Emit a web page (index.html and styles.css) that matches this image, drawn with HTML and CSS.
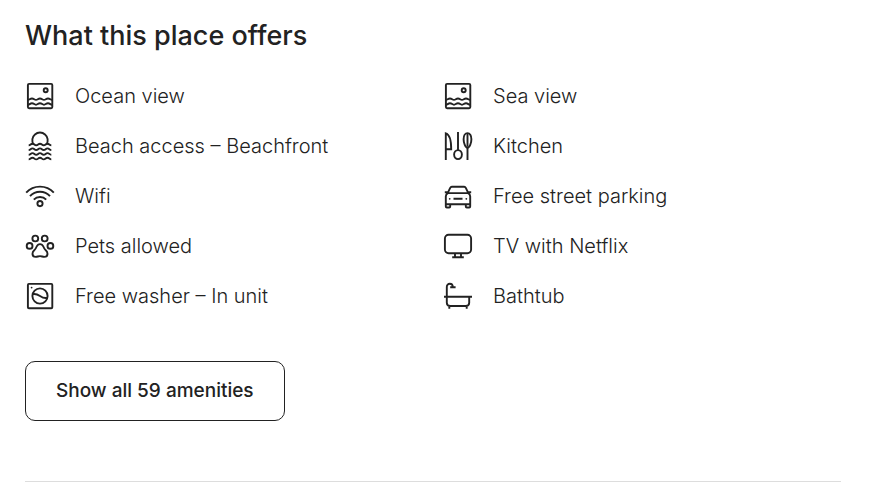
FILE: index.html
```html
<!DOCTYPE html>
<html lang="en">
<head>
<meta charset="utf-8">
<meta name="viewport" content="width=device-width, initial-scale=1">
<title>What this place offers</title>
<link rel="stylesheet" href="styles.css">
</head>
<body>
<svg class="sprite" aria-hidden="true">
  <symbol id="view" viewBox="0 0 30 30">
    <rect x="2.9" y="2.9" width="24.4" height="24.4" rx="1.2"/>
    <circle cx="20.7" cy="9.3" r="2"/>
    <path d="M3 18.900c1.500 0 2-1.400 4-1.400s2.300 1.400 4 1.400 2-1.400 4-1.400 2.300 1.400 4 1.400 2-1.400 4-1.400 2.500 1.400 4 1.400M3 23.700c1.500 0 2-1.400 4-1.400s2.300 1.400 4 1.400 2-1.400 4-1.400 2.300 1.400 4 1.400 2-1.400 4-1.400 2.500 1.400 4 1.400"/>
  </symbol>
  <symbol id="beach" viewBox="0 0 30 30">
    <path d="M8.500 13.400a7.700 7.700 0 1 1 13 0"/>
    <path d="M3.700 14.300c1.900 0 1.900-1.600 3.800-1.600s1.900 1.600 3.750 1.600S13.100 12.700 15 12.700s1.900 1.600 3.750 1.600 1.900-1.600 3.750-1.600 1.900 1.600 3.800 1.600M3.700 19c1.900 0 1.900-1.600 3.800-1.600s1.900 1.600 3.750 1.600S13.100 17.400 15 17.400s1.900 1.600 3.750 1.600 1.900-1.600 3.750-1.600 1.900 1.600 3.800 1.600M3.700 23.700c1.900 0 1.900-1.600 3.800-1.600s1.900 1.600 3.750 1.600S13.100 22.100 15 22.100s1.900 1.600 3.750 1.600 1.900-1.600 3.750-1.600 1.900 1.600 3.800 1.600M3.700 28.400c1.900 0 1.900-1.600 3.800-1.600s1.900 1.600 3.750 1.600S13.100 26.800 15 26.800s1.900 1.600 3.750 1.600 1.900-1.600 3.750-1.600 1.900 1.600 3.800 1.600"/>
  </symbol>
  <symbol id="wifi" viewBox="0 0 30 30">
    <path d="M1.200 11.700a18.700 18.700 0 0 1 27.600 0M5 15.200a13.500 13.500 0 0 1 20 0M8.800 18.700a8.400 8.400 0 0 1 12.400 0"/>
    <circle cx="15" cy="22.600" r="2.600"/>
  </symbol>
  <symbol id="paw" viewBox="0 0 30 30">
    <circle cx="10.300" cy="7.500" r="2.900"/><circle cx="19.700" cy="7.500" r="2.900"/>
    <circle cx="4.600" cy="14.900" r="2.900"/><circle cx="25.400" cy="14.900" r="2.900"/>
    <path d="M15 13.100c-1.700 0-2.700 1-3.300 2.400-.7 1.700-1.400 2.700-2.500 3.800-1.200 1.100-1.700 2-1.700 3.400 0 1.900 1.300 3.200 3.200 3.200 1.700 0 2.500-.8 4.300-.8s2.600.8 4.300.8c1.900 0 3.200-1.300 3.200-3.200 0-1.400-.5-2.300-1.700-3.400-1.100-1.100-1.800-2.100-2.500-3.800-.6-1.400-1.600-2.400-3.300-2.400z"/>
  </symbol>
  <symbol id="washer" viewBox="0 0 30 30">
    <rect x="2.900" y="2.900" width="24.400" height="24.400" rx="1"/>
    <circle cx="15" cy="15" r="7.600"/>
    <path d="M7.500 13.200c3-.8 5 .1 7.500 1.800s4.500 2.600 7.500 1.800"/>
    <circle class="solid" cx="6.600" cy="6.600" r=".9"/>
  </symbol>
  <symbol id="kitchen" viewBox="0 0 30 30">
    <path d="M2.800 29V2.300c3 .8 5.400 6.200 5.400 15.900H2.800M15 1v18M24.500 15.300V29M24.500 2v13"/>
    <ellipse cx="15" cy="23.600" rx="3.900" ry="4.500"/>
    <path d="M24.500 2.100c-2.300 0-3.900 2.600-3.900 6.200s1.800 8.500 3.900 8.500 3.900-4.900 3.900-8.500-1.600-6.200-3.900-6.200z"/>
  </symbol>
  <symbol id="car" viewBox="0 0 30 30">
    <path d="M4.900 11.700 7.200 6.800c.4-.8.800-1.100 1.600-1.100h12.400c.8 0 1.200.3 1.600 1.100l2.300 4.900M1.800 11.300h2.900l.2.800h20.200l.2-.8h2.900M4.900 12.100c-1.400.8-2.100 1.800-2.100 3.300v7.800h24.400v-7.800c0-1.500-.7-2.500-2.100-3.300M2.800 23v2.500c0 .6.4 1 1 1h2.400c.6 0 1-.4 1-1V23M22.800 23v2.500c0 .6.400 1 1 1h2.400c.6 0 1-.4 1-1V23M10.500 17.800h9"/>
    <circle class="solid" cx="6.700" cy="17.800" r=".9"/><circle class="solid" cx="23.300" cy="17.800" r=".9"/>
  </symbol>
  <symbol id="tv" viewBox="0 0 30 30">
    <rect x="1.900" y="3.800" width="26.200" height="18.400" rx="3.700"/>
    <path d="M12 22.200v3.900M18 22.200v3.900M9.200 26.200h11.600"/>
  </symbol>
  <symbol id="bath" viewBox="0 0 30 30">
    <path d="M1 15.800h28M3.800 15.800V6c0-2 1.300-3.200 3-3.200s3 1.200 3 3.400M7.200 6.300h5.400M3.800 16v5.800c0 2 1.400 3.200 3.300 3.200h15.800c1.900 0 3.300-1.200 3.300-3.200V16M6.300 25v2.800M23.700 25v2.800"/>
  </symbol>
</svg>
<main class="section">
  <h2 class="title">What this place offers</h2>
  <ul class="amenities">
    <li class="amenity"><svg class="icon" aria-hidden="true"><use href="#view"/></svg><span>Ocean view</span></li>
    <li class="amenity"><svg class="icon" aria-hidden="true"><use href="#view"/></svg><span>Sea view</span></li>
    <li class="amenity"><svg class="icon" aria-hidden="true"><use href="#beach"/></svg><span>Beach access – Beachfront</span></li>
    <li class="amenity"><svg class="icon" aria-hidden="true"><use href="#kitchen"/></svg><span>Kitchen</span></li>
    <li class="amenity"><svg class="icon" aria-hidden="true"><use href="#wifi"/></svg><span>Wifi</span></li>
    <li class="amenity"><svg class="icon" aria-hidden="true"><use href="#car"/></svg><span>Free street parking</span></li>
    <li class="amenity"><svg class="icon" aria-hidden="true"><use href="#paw"/></svg><span>Pets allowed</span></li>
    <li class="amenity"><svg class="icon" aria-hidden="true"><use href="#tv"/></svg><span>TV with Netflix</span></li>
    <li class="amenity"><svg class="icon" aria-hidden="true"><use href="#washer"/></svg><span>Free washer – In unit</span></li>
    <li class="amenity"><svg class="icon" aria-hidden="true"><use href="#bath"/></svg><span>Bathtub</span></li>
  </ul>
  <button class="show-all" type="button">Show all 59 amenities</button>
</main>
</body>
</html>
```
FILE: styles.css
```css
* {
  box-sizing: border-box;
}

body {
  margin: 0;
  background: #fff;
  color: #222;
  font-family: Inter, "Noto Sans", sans-serif;
  font-size: 20px;
  line-height: 30px;
}

.sprite {
  display: none;
}

.section {
  margin: 0 42px 0 25px;
  padding: 18px 0 60px;
  border-bottom: 1px solid #ddd;
}

.title {
  margin: 0;
  font-size: 27px;
  font-weight: 500;
  line-height: 36px;
}

.amenities {
  display: grid;
  grid-template-columns: 1fr 1fr;
  gap: 20px;
  margin: 27px 0 50px;
  padding: 0;
  list-style: none;
  font-weight: 300;
}

.amenity {
  display: flex;
  align-items: center;
  gap: 20px;
}

.icon {
  flex: none;
  width: 30px;
  height: 30px;
  fill: none;
  stroke: #222;
  stroke-width: 1.9;
}

.solid {
  fill: #222;
  stroke: none;
}

.show-all {
  display: block;
  padding: 14px 30px;
  border: 1px solid #222;
  border-radius: 10px;
  background: #fff;
  color: #222;
  font: 500 19px/30px Inter, sans-serif;
  cursor: pointer;
}
```
